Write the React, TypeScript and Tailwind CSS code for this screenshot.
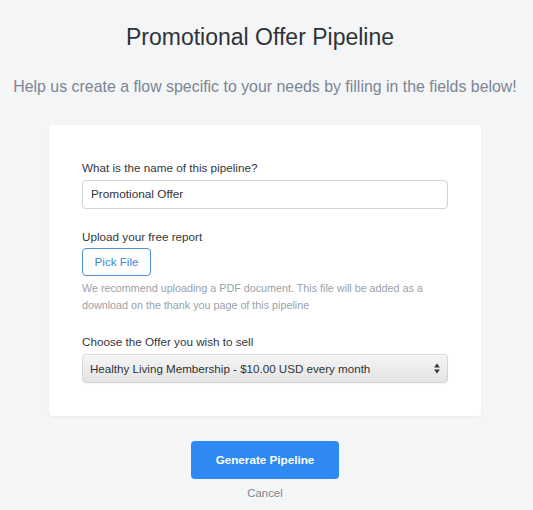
export default function App() {
  return (
    <div
      className="min-h-[510px] w-full bg-[#f4f5f7] flex flex-col items-center pr-[3px]"
      style={{ fontFamily: "'Liberation Sans', Arial, sans-serif" }}
    >
      <h1 className="mt-[22px] pr-[10px] text-[23px] leading-[30px] text-[#2f3337]">
        Promotional Offer Pipeline
      </h1>
      <p className="mt-[24px] text-[15.9px] leading-[22px] text-[#7b8692] whitespace-nowrap">
        Help us create a flow specific to your needs by filling in the fields below!
      </p>

      <div className="mt-[27px] w-[432px] rounded-[4px] bg-white shadow-[0_1px_3px_rgba(0,0,0,0.06)] px-[33px] pt-[35px] pb-[33px]">
        <label className="block text-[11.7px] leading-[16px] text-[#33373b]">
          What is the name of this pipeline?
        </label>
        <div className="mt-[4px] h-[29px] w-[366px] rounded-[4px] border border-[#cfd3d8] bg-white flex items-center px-[8px] text-[11.8px] text-[#2f3337]">
          Promotional Offer
        </div>

        <label className="mt-[20px] block text-[11.7px] leading-[16px] text-[#33373b]">
          Upload your free report
        </label>
        <button className="mt-[3px] h-[28px] w-[69px] rounded-[4px] border border-[#4a90d9] bg-white text-[11.6px] text-[#3b86d8]">
          Pick File
        </button>
        <p className="mt-[4px] text-[10.75px] leading-[17px] text-[#9aa1a9] w-[350px]">
          We recommend uploading a PDF document. This file will be added as a download on the thank you page of this pipeline
        </p>

        <label className="mt-[20px] block text-[11.7px] leading-[16px] text-[#33373b]">
          Choose the Offer you wish to sell
        </label>
        <div className="mt-[4px] h-[29px] w-[366px] rounded-[4px] border border-[#d2d5d9] bg-gradient-to-b from-[#f5f5f5] to-[#e4e4e4] shadow-[inset_0_1px_0_rgba(255,255,255,0.8),0_1px_1px_rgba(0,0,0,0.04)] flex items-center justify-between pl-[7px] pr-[7px] text-[11.6px] text-[#2f3337]">
          <span>Healthy Living Membership - $10.00 USD every month</span>
          <svg width="6" height="11" viewBox="0 0 6 11" className="text-[#333]">
            <path d="M3 0.5 L5.8 4.5 L0.2 4.5 Z" fill="currentColor" />
            <path d="M3 10.5 L5.8 6.5 L0.2 6.5 Z" fill="currentColor" />
          </svg>
        </div>
      </div>

      <button className="mt-[25px] h-[38px] w-[148px] rounded-[4px] bg-[#2e89f2] text-white text-[11.7px] font-bold">
        Generate Pipeline
      </button>
      <div className="mt-[6px] text-[11.4px] leading-[16px] text-[#7b8692]">Cancel</div>
    </div>
  );
}
